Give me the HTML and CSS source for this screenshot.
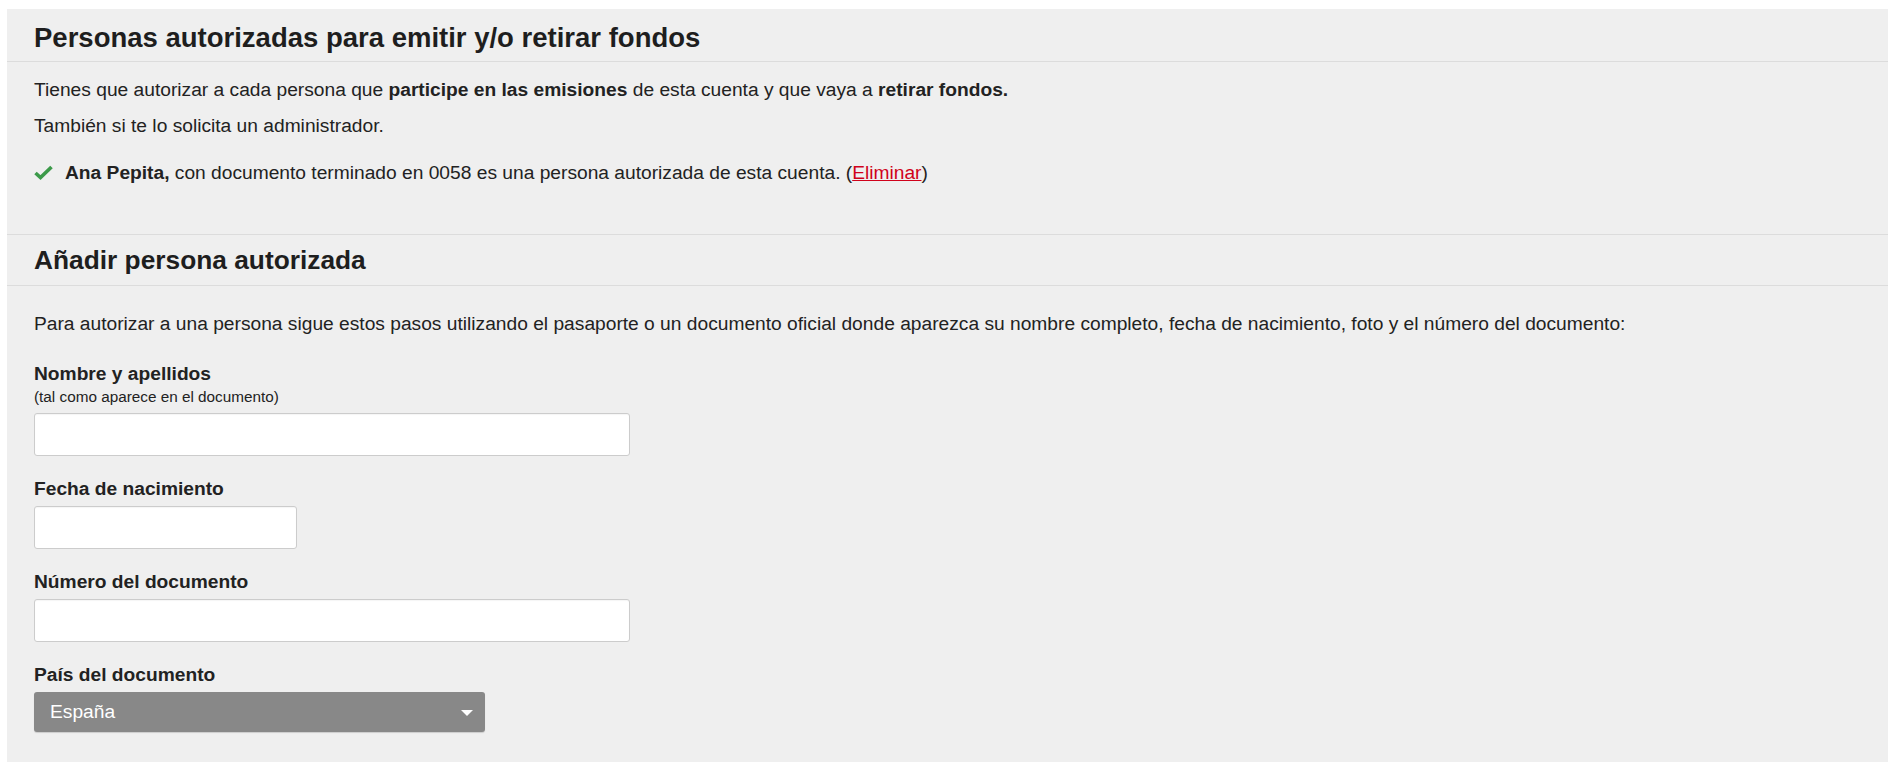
FILE: index.html
```html
<!DOCTYPE html>
<html lang="es">
<head>
<meta charset="utf-8">
<title>Personas autorizadas</title>
<link rel="stylesheet" href="styles.css">
</head>
<body>
<div class="panel">
  <section class="section">
    <div class="head head-first"><h2 class="title-main">Personas autorizadas para emitir y/o retirar fondos</h2></div>
    <div class="body body-first">
      <p class="p1">Tienes que autorizar a cada persona que <b>participe en las emisiones</b> de esta cuenta y que vaya a <b>retirar fondos.</b></p>
      <p class="p2">También si te lo solicita un administrador.</p>
      <p class="authorized">
        <svg class="check" width="19" height="15" viewBox="0 0 19 15"><path d="M1.5 8 L6.5 12.5 L17.5 2" fill="none" stroke="#3c9a4a" stroke-width="3.6" stroke-linejoin="miter"/></svg>
        <span><b>Ana Pepita,</b> con documento terminado en 0058 es una persona autorizada de esta cuenta. (<a href="#" class="danger">Eliminar</a>)</span>
      </p>
    </div>
  </section>
  <section class="section">
    <div class="head"><h2>Añadir persona autorizada</h2></div>
    <div class="body">
      <p class="intro">Para autorizar a una persona sigue estos pasos utilizando el pasaporte o un documento oficial donde aparezca su nombre completo, fecha de nacimiento, foto y el número del documento:</p>
      <div class="field">
        <label class="label label-hinted">Nombre y apellidos</label>
        <div class="hint">(tal como aparece en el documento)</div>
        <input class="input input-wide" type="text">
      </div>
      <div class="field">
        <label class="label">Fecha de nacimiento</label>
        <input class="input input-short" type="text">
      </div>
      <div class="field">
        <label class="label">Número del documento</label>
        <input class="input input-wide" type="text">
      </div>
      <div class="field">
        <label class="label">País del documento</label>
        <div class="select"><span>España</span><span class="caret"></span></div>
      </div>
    </div>
  </section>
</div>
</body>
</html>
```
FILE: styles.css
```css
html, body {
  margin: 0;
  padding: 0;
  background: #ffffff;
}
body {
  font-family: "Liberation Sans", Arial, sans-serif;
  color: #222222;
  font-size: 19.2px;
}
.panel {
  background: #efefef;
  margin: 9px 6px 0 7px;
  padding-bottom: 40px;
}
.head {
  height: 50px;
  border-bottom: 1px solid #dcdcdc;
  padding: 0 27px;
  display: flex;
  align-items: center;
}
.head-first {
  height: 47px;
  padding-top: 5px;
}
h2 {
  margin: 0;
  font-size: 26.3px;
  font-weight: bold;
  line-height: 32px;
  color: #1e1e1e;
}
.title-main {
  font-size: 27.5px;
}
.body {
  padding: 0 27px;
}
.body-first {
  padding-top: 16px;
  padding-bottom: 49px;
  border-bottom: 1px solid #dcdcdc;
}
p {
  margin: 0;
  line-height: 24px;
}
.p2 {
  margin-top: 12px;
}
.authorized {
  margin-top: 23px;
  display: flex;
  align-items: center;
  gap: 12px;
}
.check {
  display: block;
  margin-top: -2px;
}
.danger {
  color: #d0021b;
}
.intro {
  padding-top: 26px;
}
.field {
  margin-top: 22px;
  display: flex;
  flex-direction: column;
  align-items: flex-start;
}
.intro + .field {
  margin-top: 27px;
}
.label {
  font-weight: bold;
  font-size: 19.2px;
  line-height: 22px;
  margin-bottom: 6px;
}
.label-hinted {
  margin-bottom: 3px;
}
.hint {
  font-size: 15.3px;
  line-height: 18px;
  margin-bottom: 7px;
}
.input {
  box-sizing: border-box;
  height: 43px;
  background: #ffffff;
  border: 1px solid #cccccc;
  border-radius: 3px;
  box-shadow: inset 0 1px 1px rgba(0,0,0,0.04);
  margin: 0;
  padding: 0 10px;
  font: inherit;
}
.input-wide { width: 596px; }
.input-short { width: 263px; }
.select {
  box-sizing: border-box;
  width: 451px;
  height: 40px;
  background: #888888;
  border-radius: 3px;
  color: #ffffff;
  font-size: 19.2px;
  display: flex;
  align-items: center;
  justify-content: space-between;
  padding: 0 12px 0 16px;
  box-shadow: 0 1px 1px rgba(0,0,0,0.15);
}
.caret {
  width: 0;
  height: 0;
  border-left: 6px solid transparent;
  border-right: 6px solid transparent;
  border-top: 6px solid #ffffff;
  margin-top: 2px;
}
```
